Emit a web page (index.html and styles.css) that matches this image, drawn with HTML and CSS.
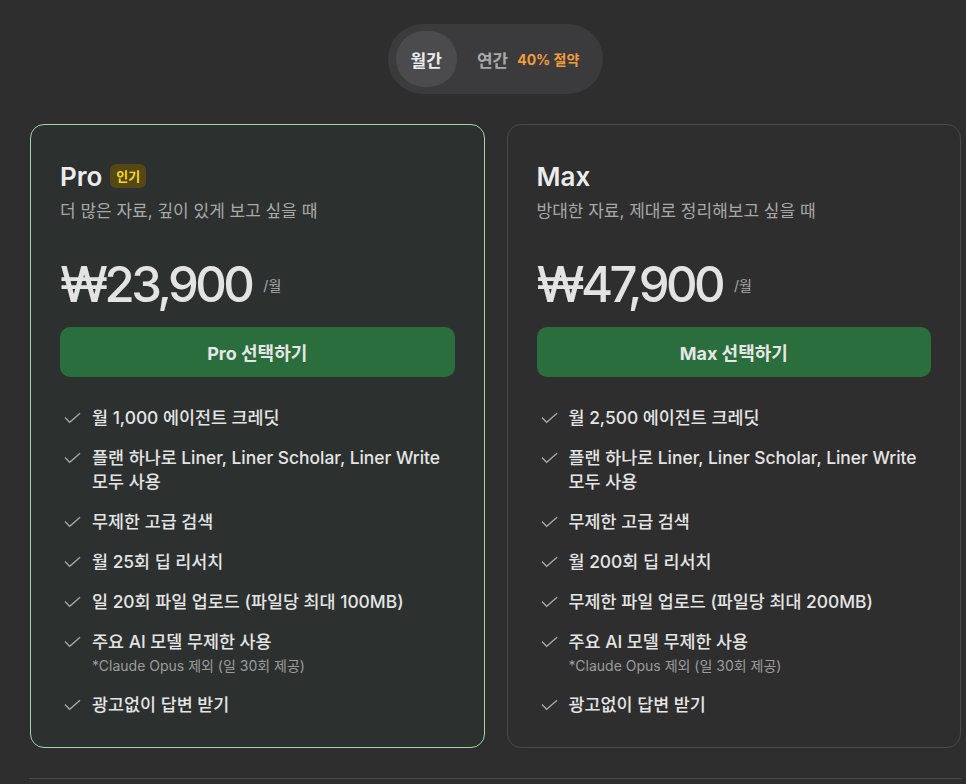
FILE: index.html
```html
<!DOCTYPE html>
<html lang="ko">
<head>
<meta charset="utf-8">
<link rel="stylesheet" href="styles.css">
</head>
<body>
<div class="page">
  <div class="toggle-row">
    <div class="toggle">
      <button class="tab active">월간</button>
      <button class="tab">연간 <span class="save">40% 절약</span></button>
    </div>
  </div>
  <div class="cards">
    <div class="card featured">
      <div class="title-row"><span class="plan">Pro</span><span class="badge">인기</span></div>
      <div class="desc">더 많은 자료, 깊이 있게 보고 싶을 때</div>
      <div class="price-row"><span class="price">₩23,900</span><span class="per">/월</span></div>
      <button class="cta">Pro 선택하기</button>
      <ul class="features">
        <li><svg class="check" viewBox="0 0 18 12"><path d="M1 5.5 L6 10.5 L17 1"/></svg><div>월 1,000 에이전트 크레딧</div></li>
        <li><svg class="check" viewBox="0 0 18 12"><path d="M1 5.5 L6 10.5 L17 1"/></svg><div>플랜 하나로 Liner, Liner Scholar, Liner Write 모두 사용</div></li>
        <li><svg class="check" viewBox="0 0 18 12"><path d="M1 5.5 L6 10.5 L17 1"/></svg><div>무제한 고급 검색</div></li>
        <li><svg class="check" viewBox="0 0 18 12"><path d="M1 5.5 L6 10.5 L17 1"/></svg><div>월 25회 딥 리서치</div></li>
        <li><svg class="check" viewBox="0 0 18 12"><path d="M1 5.5 L6 10.5 L17 1"/></svg><div>일 20회 파일 업로드 (파일당 최대 100MB)</div></li>
        <li><svg class="check" viewBox="0 0 18 12"><path d="M1 5.5 L6 10.5 L17 1"/></svg><div>주요 AI 모델 무제한 사용<div class="note">*Claude Opus 제외 (일 30회 제공)</div></div></li>
        <li><svg class="check" viewBox="0 0 18 12"><path d="M1 5.5 L6 10.5 L17 1"/></svg><div>광고없이 답변 받기</div></li>
      </ul>
    </div>
    <div class="card">
      <div class="title-row"><span class="plan">Max</span></div>
      <div class="desc">방대한 자료, 제대로 정리해보고 싶을 때</div>
      <div class="price-row"><span class="price">₩47,900</span><span class="per">/월</span></div>
      <button class="cta">Max 선택하기</button>
      <ul class="features">
        <li><svg class="check" viewBox="0 0 18 12"><path d="M1 5.5 L6 10.5 L17 1"/></svg><div>월 2,500 에이전트 크레딧</div></li>
        <li><svg class="check" viewBox="0 0 18 12"><path d="M1 5.5 L6 10.5 L17 1"/></svg><div>플랜 하나로 Liner, Liner Scholar, Liner Write 모두 사용</div></li>
        <li><svg class="check" viewBox="0 0 18 12"><path d="M1 5.5 L6 10.5 L17 1"/></svg><div>무제한 고급 검색</div></li>
        <li><svg class="check" viewBox="0 0 18 12"><path d="M1 5.5 L6 10.5 L17 1"/></svg><div>월 200회 딥 리서치</div></li>
        <li><svg class="check" viewBox="0 0 18 12"><path d="M1 5.5 L6 10.5 L17 1"/></svg><div>무제한 파일 업로드 (파일당 최대 200MB)</div></li>
        <li><svg class="check" viewBox="0 0 18 12"><path d="M1 5.5 L6 10.5 L17 1"/></svg><div>주요 AI 모델 무제한 사용<div class="note">*Claude Opus 제외 (일 30회 제공)</div></div></li>
        <li><svg class="check" viewBox="0 0 18 12"><path d="M1 5.5 L6 10.5 L17 1"/></svg><div>광고없이 답변 받기</div></li>
      </ul>
    </div>
  </div>
  <div class="rule"></div>
</div>
</body>
</html>
```
FILE: styles.css
```css
* { box-sizing: border-box; }
html, body { margin: 0; padding: 0; }
body {
  background: #2e2e2e;
  font-family: Inter, "Noto Sans CJK KR", sans-serif;
  color: #e6e6e6;
  height: 784px;
  overflow: hidden;
  word-break: keep-all;
}
.page {
  margin-left: 30px;
  width: 931px;
  padding-top: 24px;
}
.toggle-row { display: flex; justify-content: center; }
.toggle {
  display: flex;
  align-items: center;
  background: #3b3b3d;
  border-radius: 35px;
  padding: 7px 8px;
  height: 70px;
}
.tab {
  border: 0;
  background: transparent;
  font-family: inherit;
  font-size: 17px;
  font-weight: 700;
  color: #a9a9a9;
  height: 56px;
  border-radius: 28px;
  padding: 0 16px 0 20px;
  display: flex;
  align-items: center;
  gap: 9px;
}
.tab.active {
  background: #4b4b4d;
  color: #ececec;
  padding: 0 15px;
}
.save { color: #f39c3b; font-size: 14px; font-weight: 700; }
.cards {
  margin-top: 30px;
  display: grid;
  grid-template-columns: 1fr 1fr;
  gap: 22px;
}
.card {
  border: 1px solid #4a4a4a;
  border-radius: 14px;
  padding: 31px 29px 30px;
  height: 624px;
}
.card.featured {
  border-color: #a3d6a5;
  background: #2c3130;
}
.title-row { display: flex; align-items: center; gap: 8px; height: 40px; }
.plan { font-size: 26px; font-weight: 600; color: #ececec; }
.badge {
  background: #554812;
  color: #f7d82a;
  font-size: 13px;
  font-weight: 700;
  border-radius: 6px;
  padding: 2px 6px;
  line-height: 20px;
}
.desc { font-size: 17px; color: #a8a8a8; margin-top: 2px; line-height: 26px; }
.price-row { display: flex; align-items: center; gap: 12px; margin-top: 31px; height: 60px; }
.price { font-size: 49px; font-weight: 500; color: #e3e3e3; letter-spacing: -3.6px; line-height: 60px; }
.per { font-size: 14px; color: #a9a9a9; margin-top: 0; }
.cta {
  display: block;
  width: 100%;
  height: 50px;
  margin-top: 12px;
  border: 0;
  border-radius: 10px;
  background: #2a6e3d;
  color: #e6e6e6;
  font-family: inherit;
  font-size: 18px;
  font-weight: 700;
}
.features { list-style: none; margin: 29px 0 0; padding: 0; display: flex; flex-direction: column; gap: 16px; }
.features li { display: flex; gap: 11px; font-size: 17.4px; font-weight: 500; line-height: 24px; color: #e4e4e4; }
.check { width: 17px; height: 12px; flex: none; margin: 6px 0 0 4px; fill: none; stroke: #a8a8a8; stroke-width: 1.4; }
.note { font-size: 14px; font-weight: 400; color: #9c9c9c; line-height: 22px; margin-top: 1px; }
.rule { margin-top: 30px; height: 1px; background: #4a4a4a; margin-left: -1px; width: 933px; }
```
